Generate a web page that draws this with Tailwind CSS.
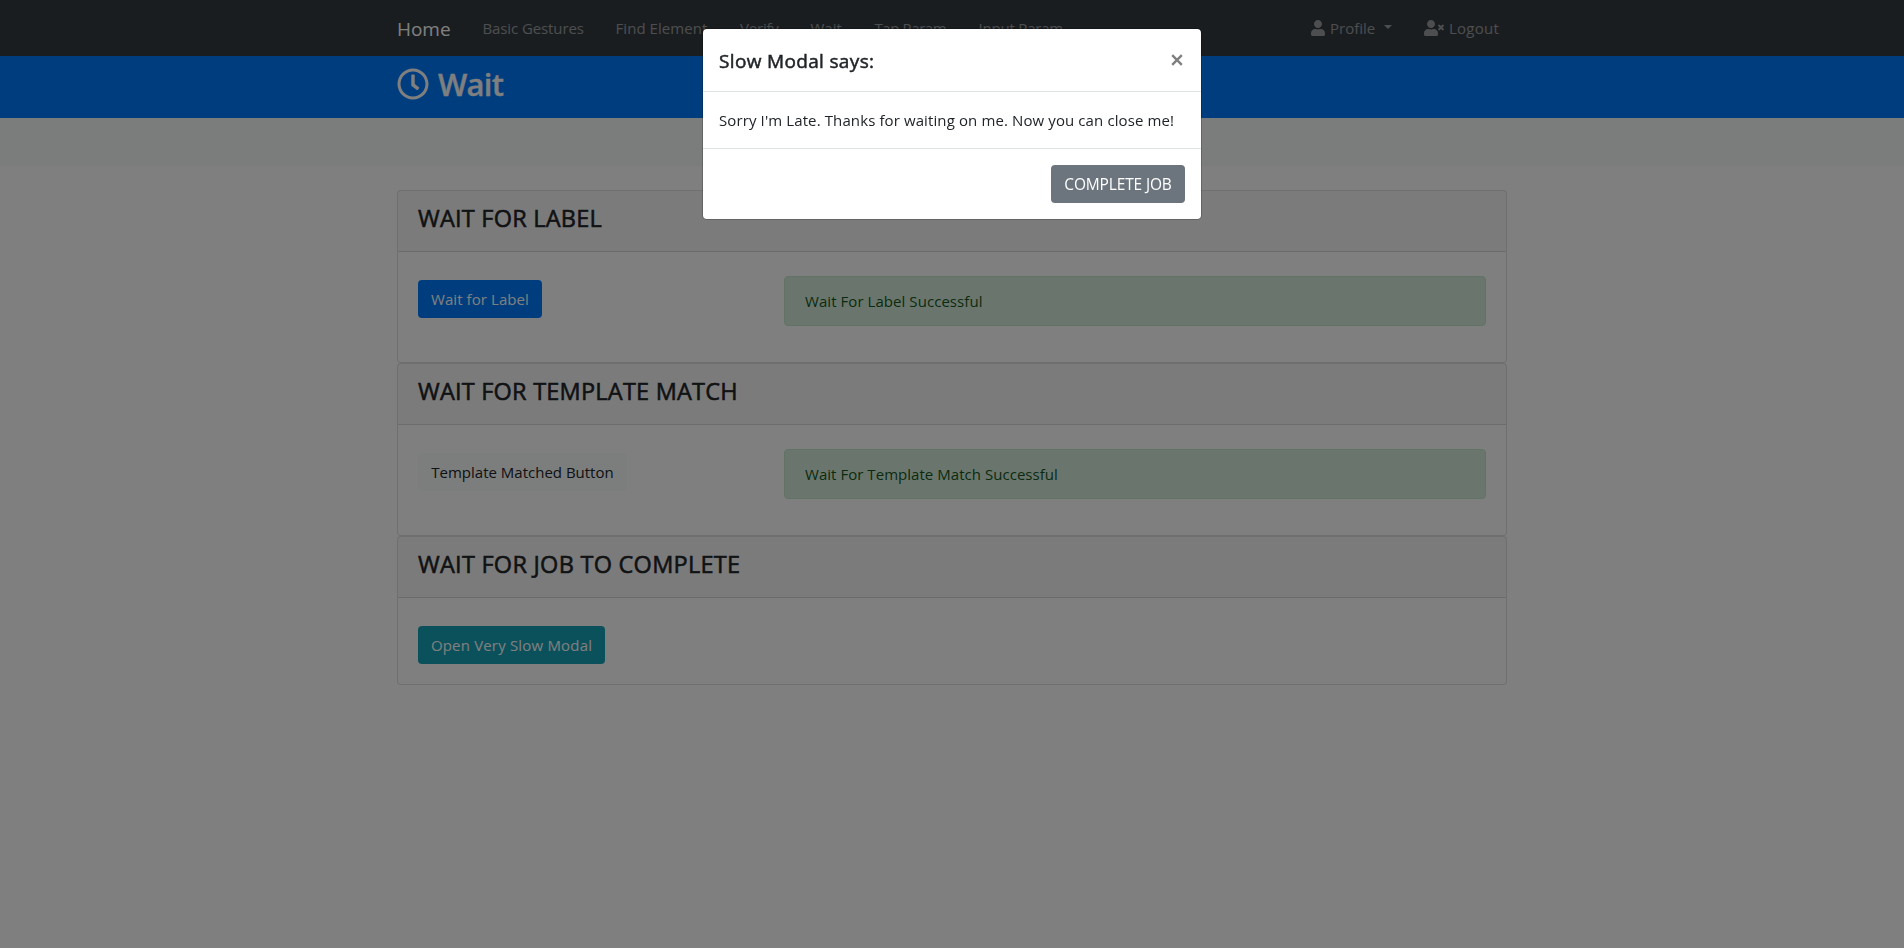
<!DOCTYPE html>
<html lang="en">
<head>
<meta charset="utf-8">
<title>Wait</title>
<script src="https://cdn.jsdelivr.net/npm/@tailwindcss/browser@4"></script>
</head>
<body class="h-screen overflow-hidden bg-white font-['Open_Sans','Noto_Sans',sans-serif] text-[15px] leading-6 text-[#212529]">
  <nav class="h-14 bg-[#343a40]">
    <div class="mx-auto flex w-[1110px] items-start whitespace-nowrap pt-4 text-white/50">
      <a class="-mt-0.5 w-[85.5px] text-[19px] leading-[30px] tracking-[-0.05px] text-white">Home</a>
      <a class="w-[133px] tracking-[-0.1px]">Basic Gestures</a>
      <a class="w-[124.5px] tracking-[0.059px]">Find Element</a>
      <a class="w-[70.5px] tracking-[-0.2px]">Verify</a>
      <a class="w-[64px]">Wait</a>
      <a class="w-[104px] tracking-[-0.4px]">Tap Param</a>
      <a class="w-[100px] tracking-[-0.2px]">Input Param</a>
      <a class="ml-auto flex w-[113px]">
        <svg class="mt-1 mr-[5px] h-4 w-3.5" viewBox="0 0 448 512" fill="currentColor"><path d="M224 256c70.7 0 128-57.3 128-128S294.7 0 224 0 96 57.3 96 128s57.3 128 128 128zm89.6 32h-16.7c-22.2 10.2-46.9 16-72.9 16s-50.6-5.8-72.9-16h-16.7C60.2 288 0 348.2 0 422.4V464c0 26.5 21.5 48 48 48h352c26.5 0 48-21.5 48-48v-41.6c0-74.2-60.2-134.4-134.4-134.4z"/></svg>
        <span class="w-[54px]">Profile</span>
        <span class="mt-[9px] h-0 w-0 border-x-[4.8px] border-t-[4.8px] border-x-transparent border-t-current"></span>
      </a>
      <a class="flex w-[83px]">
        <svg class="mt-1 mr-[5px] h-4 w-5" viewBox="0 0 640 512" fill="currentColor"><path d="M589.6 240l45.6-45.6c6.3-6.3 6.3-16.5 0-22.8l-22.8-22.8c-6.3-6.3-16.5-6.3-22.8 0L544 194.4l-45.6-45.6c-6.3-6.3-16.5-6.3-22.8 0l-22.8 22.8c-6.3 6.3-6.3 16.5 0 22.8l45.6 45.6-45.6 45.6c-6.3 6.3-6.3 16.5 0 22.8l22.8 22.8c6.3 6.3 16.5 6.3 22.8 0l45.6-45.6 45.6 45.6c6.3 6.3 16.5 6.3 22.8 0l22.8-22.8c6.3-6.3 6.3-16.5 0-22.8L589.6 240zM224 256c70.7 0 128-57.3 128-128S294.7 0 224 0 96 57.3 96 128s57.3 128 128 128zm89.6 32h-16.7c-22.2 10.2-46.9 16-72.9 16s-50.6-5.8-72.9-16h-16.7C60.2 288 0 348.2 0 422.4V464c0 26.5 21.5 48 48 48h352c26.5 0 48-21.5 48-48v-41.6c0-74.2-60.2-134.4-134.4-134.4z"/></svg>
        <span class="tracking-[0.25px]">Logout</span>
      </a>
    </div>
  </nav>
  <header class="h-[62px] bg-[#007bff] text-white">
    <div class="mx-auto flex w-[1110px] pt-[9px]">
      <svg class="mt-[3px] mr-[9px] h-8 w-8" viewBox="0 0 512 512" fill="currentColor"><path d="M256 8C119 8 8 119 8 256s111 248 248 248 248-111 248-248S393 8 256 8zm0 448c-110.5 0-200-89.5-200-200S145.5 56 256 56s200 89.5 200 200-89.5 200-200 200zm61.8-104.4l-84.9-61.7c-3.1-2.3-4.9-5.9-4.9-9.7V116c0-6.6 5.4-12 12-12h32c6.6 0 12 5.4 12 12v141.7l66.8 48.6c5.4 3.9 6.5 11.4 2.6 16.8L334.6 349c-3.9 5.3-11.4 6.5-16.8 2.6z"/></svg>
      <h1 class="text-[31px] leading-[38px] font-semibold tracking-[-0.75px] [-webkit-text-stroke:0.3px]">Wait</h1>
    </div>
  </header>
  <div class="h-12 bg-[#f6fbf9]"></div>

  <main class="mx-auto mt-6 w-[1110px]">
    <section class="h-[173px] rounded border border-black/[.125] bg-white">
      <div class="h-[61px] border-b border-black/[.125] bg-black/[.03] px-5 pt-3">
        <h4 class="text-[23.5px] leading-[30px] tracking-[0.23px] [-webkit-text-stroke:0.55px]">WAIT FOR LABEL</h4>
      </div>
      <div class="flex items-start px-5 pt-6">
        <button class="mt-1 h-[38px] w-[124px] rounded bg-[#007bff] tracking-[0.08px] text-white">Wait for Label</button>
        <div class="ml-auto h-[50px] w-[702px] rounded border border-[#c3e6cb] bg-[#d4edda] px-5 py-3 tracking-[0.06px] text-[#155724]">Wait For Label Successful</div>
      </div>
    </section>
    <section class="h-[173px] rounded border border-black/[.125] bg-white">
      <div class="h-[61px] border-b border-black/[.125] bg-black/[.03] px-5 pt-3">
        <h4 class="text-[23.5px] leading-[30px] tracking-[0.22px] [-webkit-text-stroke:0.55px]">WAIT FOR TEMPLATE MATCH</h4>
      </div>
      <div class="flex items-start px-5 pt-6">
        <button class="mt-1 h-[38px] w-[209px] rounded bg-[#f8fbfa]">Template Matched Button</button>
        <div class="ml-auto h-[50px] w-[702px] rounded border border-[#c3e6cb] bg-[#d4edda] px-5 py-3 tracking-[0.04px] text-[#155724]">Wait For Template Match Successful</div>
      </div>
    </section>
    <section class="h-[149px] rounded border border-black/[.125] bg-white">
      <div class="h-[61px] border-b border-black/[.125] bg-black/[.03] px-5 pt-3">
        <h4 class="text-[23.5px] leading-[30px] tracking-[0.26px] [-webkit-text-stroke:0.55px]">WAIT FOR JOB TO COMPLETE</h4>
      </div>
      <div class="px-5 pt-7">
        <button class="block h-[38px] w-[187px] rounded bg-[#17a2b8] tracking-[0.18px] text-white">Open Very Slow Modal</button>
      </div>
    </section>
  </main>

  <div class="fixed inset-0 bg-black/50"></div>
  <div class="fixed inset-0 pt-7">
    <div class="mx-auto h-[192px] w-[500px] rounded-[4.8px] border border-black/20 bg-white bg-clip-padding">
      <div class="flex h-[63px] items-start justify-between border-b border-[#dee2e6] px-4 pt-4">
        <h5 class="mt-px text-[19px] leading-[30px] tracking-[0.34px] [-webkit-text-stroke:0.5px]">Slow Modal says:</h5>
        <svg class="mt-[9px] mr-[2.5px] h-3 w-3" viewBox="0 0 12 12" fill="none" stroke="#7f7f7f" stroke-width="2.4"><path d="M1.2 1.2l9.6 9.6M10.8 1.2l-9.6 9.6"/></svg>
      </div>
      <p class="h-14 p-4 tracking-[0.11px] whitespace-nowrap">Sorry I'm Late. Thanks for waiting on me. Now you can close me!</p>
      <div class="flex justify-end border-t border-[#dee2e6] p-4">
        <button class="h-[38px] w-[134px] rounded bg-[#6c757d] text-[15.5px] tracking-[-0.15px] text-white">COMPLETE JOB</button>
      </div>
    </div>
  </div>
</body>
</html>
